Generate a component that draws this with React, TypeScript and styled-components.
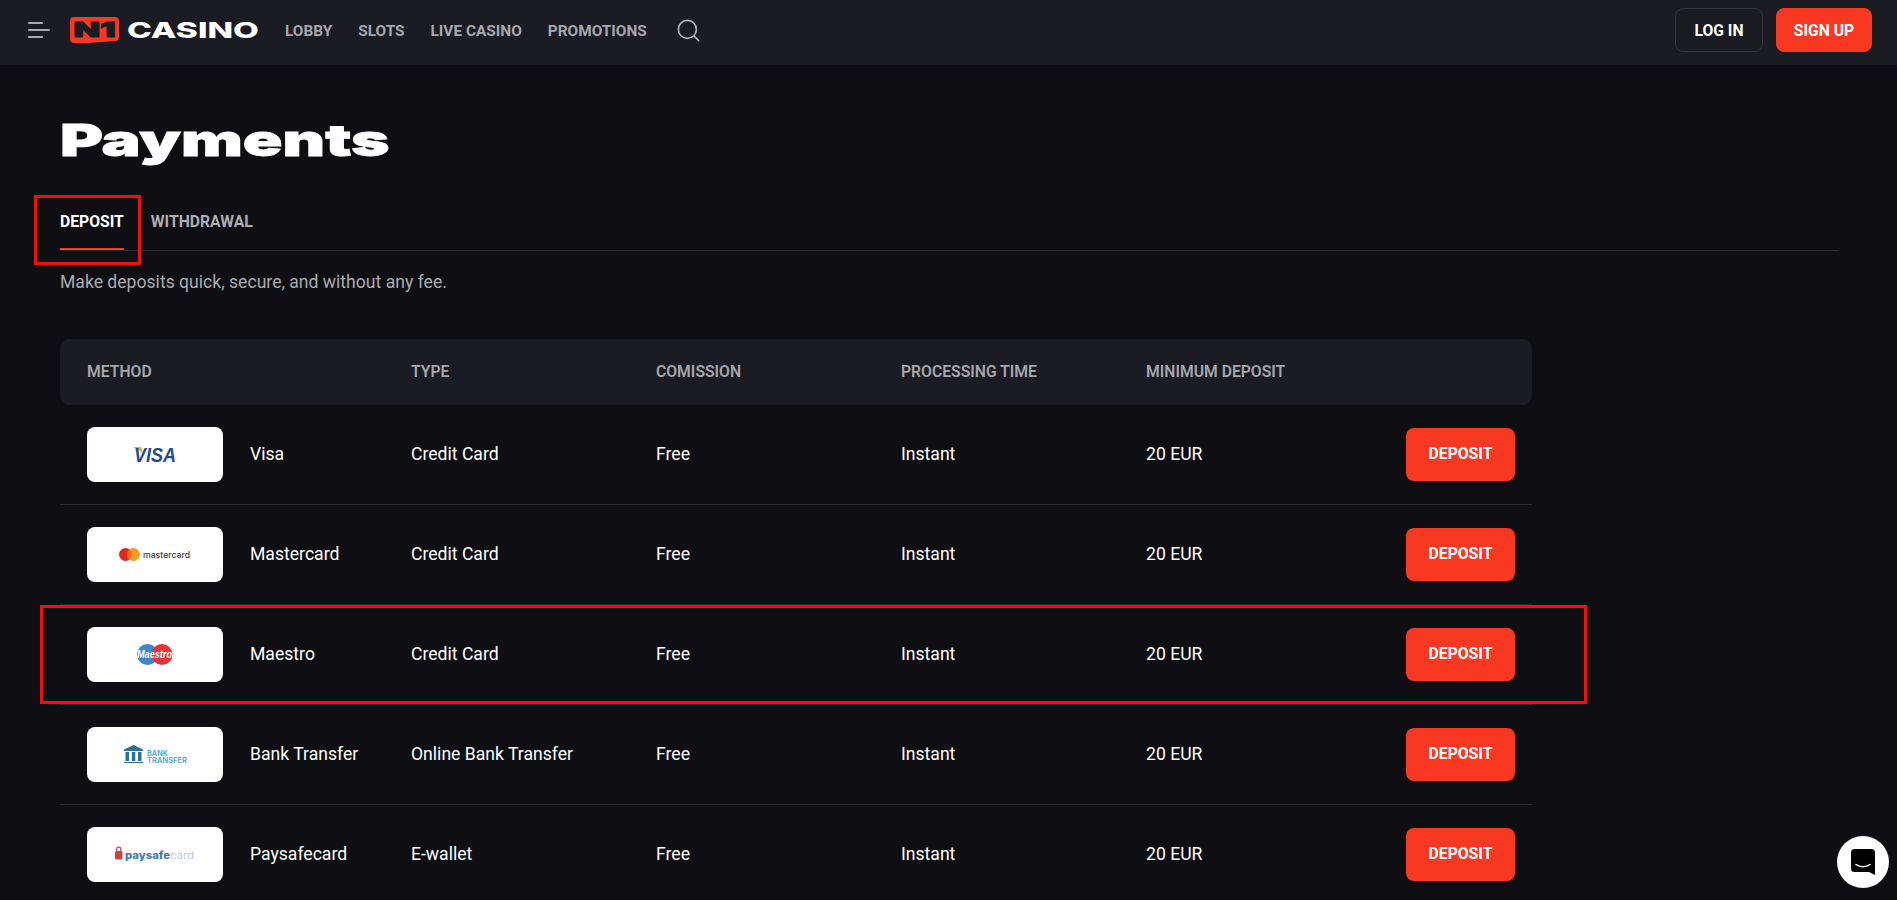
import React from "react";
import styled, { createGlobalStyle } from "styled-components";
import { Search } from "lucide-react";

const Global = createGlobalStyle`
  html, body { margin: 0; padding: 0; background: #0f0f13; overflow: hidden; height: 100%; }
  body { font-family: Roboto, "Liberation Sans", sans-serif; color: #fff; }
  * { box-sizing: border-box; }
`;

const Page = styled.div`
  position: relative;
  height: 900px;
  overflow: hidden;
  background: #0f0f13;
`;

const Header = styled.header`
  height: 65px;
  background: #1a1b23;
  display: flex;
  align-items: center;
  padding: 0 25px 5px 28px;
`;

const Burger = styled.div`
  width: 22px;
  display: flex;
  flex-direction: column;
  gap: 5px;
  margin-right: 20px;
`;

const BurgerLine = styled.span<{ $short?: boolean }>`
  display: block;
  height: 2px;
  border-radius: 1px;
  width: ${(p) => (p.$short ? "15px" : "22px")};
  background: #a9abb3;
`;

const Brand = styled.div`
  display: flex;
  align-items: center;
  gap: 8px;
  margin-right: 27px;
`;

const BrandWord = styled.span`
  display: inline-block;
  width: 131px;
  font-family: Inter, "Liberation Sans", sans-serif;
  font-weight: 800;
  font-size: 22px;
  line-height: 26px;
  color: #fff;
  transform: scaleX(1.52);
  transform-origin: left center;
  letter-spacing: 0;
`;

const Nav = styled.nav`
  display: flex;
  align-items: center;
  gap: 26px;
  padding-top: 2px;
`;

const NavLink = styled.a`
  font-size: 15.4px;
  font-weight: 700;
  color: #a7a8ae;
  text-transform: uppercase;
`;

const SearchButton = styled.span`
  display: flex;
  margin-left: 28px;
  color: #b4b5bb;
`;

const HeaderActions = styled.div`
  margin-left: auto;
  display: flex;
  gap: 13px;
`;

const HeaderButton = styled.button<{ $primary?: boolean }>`
  height: 44px;
  padding: 0;
  width: ${(p) => (p.$primary ? "96px" : "88px")};
  border-radius: 8px;
  font-family: inherit;
  font-size: 15.7px;
  font-weight: 700;
  color: #fff;
  border: 1px solid ${(p) => (p.$primary ? "#f83821" : "#34353c")};
  background: ${(p) => (p.$primary ? "#f83821" : "transparent")};
`;

const Main = styled.main`
  padding: 0 59px 0 60px;
`;

const Title = styled.h1`
  margin: 0;
  padding-top: 50px;
  height: 131px;
  font-family: Inter, "Liberation Sans", sans-serif;
  font-size: 44px;
  line-height: 50px;
  font-weight: 900;
  color: #fff;
  transform: scaleX(1.49);
  transform-origin: left center;
  -webkit-text-stroke: 0.8px #fff;
`;

const Tabs = styled.div`
  display: flex;
  gap: 27px;
  height: 55px;
  border-bottom: 1px solid #2a2b31;
`;

const Tab = styled.a<{ $active?: boolean }>`
  height: 54px;
  line-height: 52px;
  font-size: 15.73px;
  font-weight: 700;
  color: ${(p) => (p.$active ? "#fff" : "#aeaeb2")};
  border-bottom: 2px solid ${(p) => (p.$active ? "#e8432c" : "transparent")};
`;

const Lead = styled.p`
  margin: 0;
  padding-top: 20px;
  height: 88px;
  font-size: 17.6px;
  line-height: 22px;
  color: #aaabad;
`;

const Table = styled.div`
  width: 1472px;
`;

const Grid = styled.div`
  display: grid;
  grid-template-columns: 324px 245px 245px 245px 1fr;
  align-items: center;
  padding: 0 17px 0 27px;
`;

const HeadRow = styled(Grid)`
  height: 66px;
  background: #1a1b23;
  border-radius: 9px;
`;

const HeadCell = styled.span`
  font-size: 15.73px;
  font-weight: 600;
  color: #a6a7ab;
  padding-bottom: 2px;
`;

const Row = styled(Grid)`
  height: 100px;
  border-bottom: 1px solid #2a2b31;
`;

const MethodCell = styled.div`
  display: flex;
  align-items: center;
  gap: 27px;
`;

const LogoCard = styled.div`
  width: 136px;
  height: 55px;
  border-radius: 8px;
  background: #fff;
  display: flex;
  flex: none;
`;

const Cell = styled.span`
  font-size: 17.6px;
  color: #fff;
  padding-bottom: 2px;
`;

const LastCell = styled.div`
  display: flex;
  align-items: center;
  justify-content: space-between;
`;

const DepositButton = styled.button`
  width: 109px;
  height: 53px;
  padding: 0 0 2px;
  border: 0;
  border-radius: 8px;
  background: #f83821;
  color: #fff;
  font-family: inherit;
  font-size: 15.73px;
  font-weight: 700;
`;

const Annotation = styled.div<{ $x: number; $y: number; $w: number; $h: number }>`
  position: absolute;
  left: ${(p) => p.$x}px;
  top: ${(p) => p.$y}px;
  width: ${(p) => p.$w}px;
  height: ${(p) => p.$h}px;
  border: 3px solid #ee1010;
  pointer-events: none;
`;

const ChatBubble = styled.div`
  position: absolute;
  left: 1837px;
  top: 836px;
  width: 52px;
  height: 52px;
  border-radius: 50%;
  background: #fff;
  display: flex;
  align-items: center;
  justify-content: center;
`;

const N1Logo = () => (
  <svg width="49" height="26" viewBox="0 0 49 26">
    <path d="M4 0H45a4 4 0 0 1 4 4V20a4 4 0 0 1-4 4L18 26H4a4 4 0 0 1-4-4V4a4 4 0 0 1 4-4z" fill="#f83821" />
    <text x="24.5" y="19.500" textAnchor="middle" fontFamily="Inter, sans-serif" fontWeight="900" fontSize="20" fill="#1a1b23" textLength="42" lengthAdjust="spacingAndGlyphs" stroke="#1a1b23" strokeWidth="1">N1</text>
  </svg>
);

const VisaLogo = () => (
  <svg width="136" height="55" viewBox="0 0 136 55">
    <path d="M46 20h8l3 9c-2-4-6-7-11-9z" fill="#e9a92b" />
    <text x="68" y="35" textAnchor="middle" fontFamily="Liberation Sans, sans-serif" fontStyle="italic" fontWeight="700" fontSize="21" fill="#1f4b8f" textLength="42" lengthAdjust="spacingAndGlyphs">VISA</text>
  </svg>
);

const MastercardLogo = () => (
  <svg width="136" height="55" viewBox="0 0 136 55">
    <circle cx="38.5" cy="27.5" r="6.5" fill="#e4261f" />
    <circle cx="46.5" cy="27.5" r="6.5" fill="#f59e1c" />
    <path d="M42.5 22.4a6.5 6.5 0 0 1 0 10.2a6.5 6.5 0 0 1 0-10.2z" fill="#f26a1f" />
    <text x="56" y="30.5" fontFamily="Inter, sans-serif" fontWeight="500" fontSize="8.5" fill="#3a3a3a" textLength="47" lengthAdjust="spacingAndGlyphs">mastercard</text>
  </svg>
);

const MaestroLogo = () => (
  <svg width="136" height="55" viewBox="0 0 136 55">
    <circle cx="60.5" cy="27.5" r="10.5" fill="#3b87c8" />
    <circle cx="75" cy="27.5" r="10.5" fill="#e2353a" />
    <text x="67.5" y="31" textAnchor="middle" fontFamily="Liberation Sans, sans-serif" fontStyle="italic" fontWeight="700" fontSize="11" fill="#fff" textLength="35" lengthAdjust="spacingAndGlyphs">Maestro</text>
  </svg>
);

const BankLogo = () => (
  <svg width="136" height="55" viewBox="0 0 136 55">
    <g fill="#2c6f9b">
      <path d="M37 22.5l9.500-4.500 9.500 4.500v1.500H37z" />
      <rect x="38.5" y="25" width="3.500" height="9" />
      <rect x="44.8" y="25" width="3.500" height="9" />
      <rect x="51" y="25" width="3.500" height="9" />
      <rect x="37" y="35" width="19" height="1" />
    </g>
    <g fontFamily="Inter, sans-serif" fontWeight="600" fontSize="7.5" fill="#4ba3cf">
      <text x="60" y="29" textLength="21" lengthAdjust="spacingAndGlyphs">BANK</text>
      <text x="60" y="36" textLength="40" lengthAdjust="spacingAndGlyphs">TRANSFER</text>
    </g>
  </svg>
);

const PaysafeLogo = () => (
  <svg width="136" height="55" viewBox="0 0 136 55">
    <rect x="28" y="24" width="7.500" height="8.500" rx="1.500" fill="#c9453f" />
    <path d="M29.7 24.500v-2.300a2.050 2.050 0 0 1 4.100 0v2.300" fill="none" stroke="#c9453f" strokeWidth="1.200" />
    <text x="38" y="32" fontFamily="Inter, sans-serif" fontWeight="800" fontSize="10.5" fill="#3a7db0" textLength="45" lengthAdjust="spacingAndGlyphs">paysafe</text>
    <text x="83" y="32" fontFamily="Inter, sans-serif" fontWeight="300" fontSize="10.5" fill="#a9c4d8" textLength="24" lengthAdjust="spacingAndGlyphs">card</text>
  </svg>
);

const ChatIcon = () => (
  <svg width="24" height="26" viewBox="0 0 24 26">
    <path d="M3.500 0h17A3.500 3.500 0 0 1 24 3.500V26l-6-3H3.500A3.500 3.500 0 0 1 0 19.500V3.500A3.500 3.500 0 0 1 3.500 0z" fill="#000" />
    <path d="M5 15.500c4 3 10 3 14 0" fill="none" stroke="#fff" strokeWidth="1.500" strokeLinecap="round" />
  </svg>
);

const methods = [
  { name: "Visa", type: "Credit Card", Logo: VisaLogo },
  { name: "Mastercard", type: "Credit Card", Logo: MastercardLogo },
  { name: "Maestro", type: "Credit Card", Logo: MaestroLogo },
  { name: "Bank Transfer", type: "Online Bank Transfer", Logo: BankLogo },
  { name: "Paysafecard", type: "E-wallet", Logo: PaysafeLogo },
];

export default function App() {
  return (
    <Page>
      <Global />
      <Header>
        <Burger>
          <BurgerLine $short />
          <BurgerLine />
          <BurgerLine $short />
        </Burger>
        <Brand>
          <N1Logo />
          <BrandWord>CASINO</BrandWord>
        </Brand>
        <Nav>
          <NavLink>Lobby</NavLink>
          <NavLink>Slots</NavLink>
          <NavLink>Live Casino</NavLink>
          <NavLink>Promotions</NavLink>
        </Nav>
        <SearchButton>
          <Search size={27} strokeWidth={1.5} />
        </SearchButton>
        <HeaderActions>
          <HeaderButton>LOG IN</HeaderButton>
          <HeaderButton $primary>SIGN UP</HeaderButton>
        </HeaderActions>
      </Header>
      <Main>
        <Title>Payments</Title>
        <Tabs>
          <Tab $active>DEPOSIT</Tab>
          <Tab>WITHDRAWAL</Tab>
        </Tabs>
        <Lead>Make deposits quick, secure, and without any fee.</Lead>
        <Table>
          <HeadRow>
            <HeadCell>METHOD</HeadCell>
            <HeadCell>TYPE</HeadCell>
            <HeadCell>COMISSION</HeadCell>
            <HeadCell>PROCESSING TIME</HeadCell>
            <HeadCell>MINIMUM DEPOSIT</HeadCell>
          </HeadRow>
          {methods.map(({ name, type, Logo }) => (
            <Row key={name}>
              <MethodCell>
                <LogoCard>
                  <Logo />
                </LogoCard>
                <Cell>{name}</Cell>
              </MethodCell>
              <Cell>{type}</Cell>
              <Cell>Free</Cell>
              <Cell>Instant</Cell>
              <LastCell>
                <Cell>20 EUR</Cell>
                <DepositButton>DEPOSIT</DepositButton>
              </LastCell>
            </Row>
          ))}
        </Table>
      </Main>
      <Annotation $x={34} $y={195} $w={107} $h={70} />
      <Annotation $x={40} $y={605} $w={1547} $h={99} />
      <ChatBubble>
        <ChatIcon />
      </ChatBubble>
    </Page>
  );
}
